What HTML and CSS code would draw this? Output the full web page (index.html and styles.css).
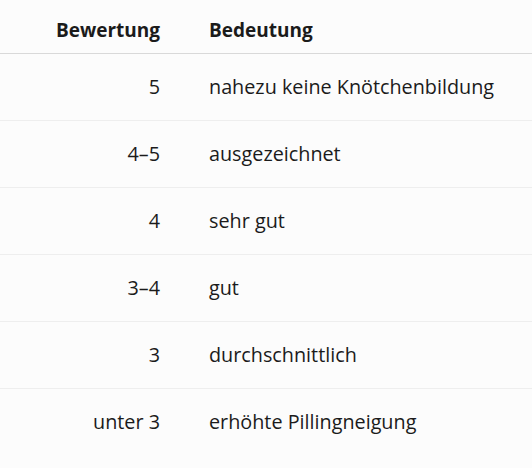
FILE: index.html
```html
<!DOCTYPE html>
<html lang="de">
<head>
<meta charset="utf-8">
<link rel="stylesheet" href="styles.css">
</head>
<body>
<table class="rating-table">
  <thead>
    <tr>
      <th class="col-score">Bewertung</th>
      <th class="col-meaning">Bedeutung</th>
    </tr>
  </thead>
  <tbody>
    <tr><td class="col-score">5</td><td class="col-meaning">nahezu keine Knötchenbildung</td></tr>
    <tr><td class="col-score">4–5</td><td class="col-meaning">ausgezeichnet</td></tr>
    <tr><td class="col-score">4</td><td class="col-meaning">sehr gut</td></tr>
    <tr><td class="col-score">3–4</td><td class="col-meaning">gut</td></tr>
    <tr><td class="col-score">3</td><td class="col-meaning">durchschnittlich</td></tr>
    <tr><td class="col-score">unter 3</td><td class="col-meaning">erhöhte Pillingneigung</td></tr>
  </tbody>
</table>
</body>
</html>
```
FILE: styles.css
```css
html, body {
  margin: 0;
  padding: 0;
  background: #fcfcfc;
}

body {
  font-family: "Open Sans", "Noto Sans", sans-serif;
  font-size: 19.8px;
  color: #1b1b1b;
}

.rating-table {
  width: 100%;
  border-collapse: collapse;
}

.rating-table th,
.rating-table td {
  line-height: 28px;
  padding: 0;
}

.rating-table th {
  font-weight: 700;
  font-size: 19px;
  padding-top: 16px;
  padding-bottom: 9px;
  border-bottom: 1px solid #d9d9d9;
}

.rating-table td {
  font-weight: 400;
  padding-top: 19px;
  padding-bottom: 19px;
}

.rating-table tbody tr + tr td {
  border-top: 1px solid #eeeeee;
}

.col-score {
  width: 160px;
  text-align: right;
}

.col-meaning {
  text-align: left;
  padding-left: 49px !important;
}
```
